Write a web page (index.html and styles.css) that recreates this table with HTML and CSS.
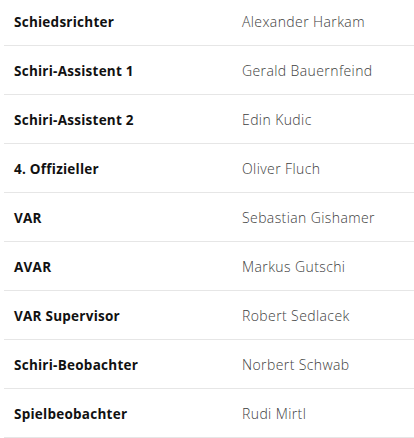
FILE: index.html
```html
<!DOCTYPE html>
<html lang="de">
<head>
<meta charset="utf-8">
<link rel="stylesheet" href="styles.css">
</head>
<body>
<div class="officials">
  <div class="row"><div class="role">Schiedsrichter</div><div class="name">Alexander Harkam</div></div>
  <div class="row"><div class="role">Schiri-Assistent 1</div><div class="name">Gerald Bauernfeind</div></div>
  <div class="row"><div class="role">Schiri-Assistent 2</div><div class="name">Edin Kudic</div></div>
  <div class="row"><div class="role">4. Offizieller</div><div class="name">Oliver Fluch</div></div>
  <div class="row"><div class="role">VAR</div><div class="name">Sebastian Gishamer</div></div>
  <div class="row"><div class="role">AVAR</div><div class="name">Markus Gutschi</div></div>
  <div class="row"><div class="role">VAR Supervisor</div><div class="name">Robert Sedlacek</div></div>
  <div class="row"><div class="role">Schiri-Beobachter</div><div class="name">Norbert Schwab</div></div>
  <div class="row"><div class="role">Spielbeobachter</div><div class="name">Rudi Mirtl</div></div>
</div>
</body>
</html>
```
FILE: styles.css
```css
html, body {
  margin: 0;
  padding: 0;
  background: #ffffff;
}
body {
  overflow: hidden;
}
.officials {
  margin: -3px 0 0 4px;
  display: flex;
  flex-direction: column;
}
.row {
  display: grid;
  grid-template-columns: 228px 1fr;
  align-items: center;
  height: 48px;
  padding-left: 10px;
  border-bottom: 1px solid #e6e6e6;
}
.role {
  font-family: "Open Sans", "Noto Sans", sans-serif;
  font-weight: 700;
  font-size: 13.5px;
  letter-spacing: 0.25px;
  color: #111111;
  padding-top: 1px;
}
.name {
  font-family: "Open Sans", "Noto Sans", sans-serif;
  font-weight: 300;
  font-size: 14px;
  letter-spacing: 0.4px;
  color: #3d3d3d;
  padding-top: 1px;
}
```
